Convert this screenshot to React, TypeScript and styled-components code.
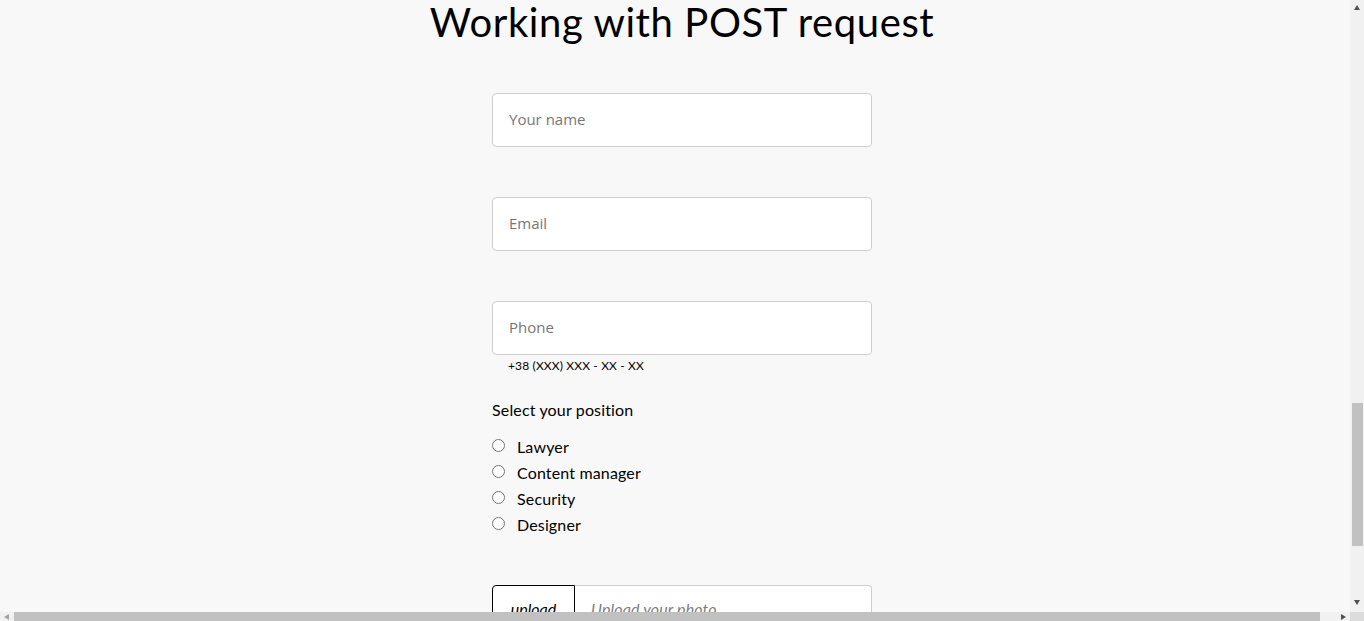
import React, { useEffect } from "react";
import styled, { createGlobalStyle } from "styled-components";

// the form sits low on a long landing page; the shot is taken scrolled down to it
const SCROLL_TOP = 1668;

const GlobalStyle = createGlobalStyle`
  html, body {
    margin: 0;
    padding: 0;
    background: #f8f8f8;
  }
  body {
    font-family: Lato, "Noto Sans", sans-serif;
    color: #000;
    letter-spacing: 0.15px;
  }
`;

const Page = styled.div`
  min-width: 1364px;
  min-height: 2500px;
  padding-top: ${SCROLL_TOP - 2}px;
  box-sizing: border-box;
`;

const Section = styled.section`
  display: flex;
  flex-direction: column;
  align-items: center;
`;

const Title = styled.h1`
  margin: 0;
  font-size: 40px;
  line-height: 48px;
  font-weight: 400;
  letter-spacing: 0.6px;
`;

const Form = styled.form`
  width: 380px;
  margin-top: 47px;
  display: flex;
  flex-direction: column;
`;

const Field = styled.div<{ gap?: number }>`
  display: flex;
  flex-direction: column;
  margin-bottom: ${({ gap }) => (gap === undefined ? 50 : gap)}px;
`;

const Input = styled.input`
  box-sizing: border-box;
  width: 100%;
  height: 54px;
  padding: 0 16px 2px;
  border: 1px solid #d0cfcf;
  border-radius: 4px;
  background: #fff;
  font-family: "Open Sans", "Noto Sans", sans-serif;
  font-size: 15px;
  letter-spacing: 0;
  outline: none;
  &::placeholder {
    font-family: "Open Sans", "Noto Sans", sans-serif;
    font-size: 15px;
    color: #767676;
  }
`;

const Helper = styled.span`
  margin-top: 4px;
  padding-left: 16px;
  font-size: 12px;
  line-height: 14px;
  color: #000;
`;

const Legend = styled.div`
  margin-top: 27px;
  font-size: 16px;
  line-height: 20px;
`;

const RadioList = styled.div`
  margin-top: 13px;
  display: flex;
  flex-direction: column;
`;

const RadioRow = styled.label`
  display: flex;
  align-items: center;
  height: 26px;
  font-size: 16px;
  cursor: pointer;
`;

const Radio = styled.input`
  width: 13px;
  height: 13px;
  margin: 0 12px 0 0;
  position: relative;
  top: -1px;
`;

const Upload = styled.div`
  margin-top: 48px;
  display: flex;
  height: 54px;
`;

const UploadButton = styled.button`
  width: 83px;
  padding: 0 0 7px;
  border: 1px solid #000;
  border-radius: 4px 0 0 4px;
  background: #fff;
  font-family: Lato, "Noto Sans", sans-serif;
  font-size: 16px;
  font-style: italic;
  color: #000;
  cursor: pointer;
`;

const UploadInput = styled.div`
  flex: 1;
  display: flex;
  align-items: center;
  padding: 0 0 7px 16px;
  border: 1px solid #d0cfcf;
  border-left: none;
  border-radius: 0 4px 4px 0;
  background: #fff;
  font-size: 16px;
  font-style: italic;
  color: #7e7e7e;
`;

/* the browser's own scrollbars, as they show in the shot */
const VScroll = styled.div`
  position: fixed;
  top: 0;
  right: 0;
  bottom: 9px;
  width: 14px;
  background: #f1f1f1;
  display: flex;
  flex-direction: column;
  align-items: center;
  justify-content: space-between;
  padding: 5px 0 7px;
  box-sizing: border-box;
`;

const VThumb = styled.div`
  position: absolute;
  top: 403px;
  left: 2px;
  width: 11px;
  height: 143px;
  background: #c1c1c1;
`;

const HScroll = styled.div`
  position: fixed;
  left: 0;
  right: 14px;
  bottom: 0;
  height: 9px;
  background: #f1f1f1;
  display: flex;
  align-items: flex-start;
  padding-top: 2px;
  box-sizing: border-box;
`;

const HThumb = styled.div`
  position: absolute;
  top: 0;
  left: 14px;
  width: 1306px;
  height: 9px;
  background: #c1c1c1;
`;

const Corner = styled.div`
  position: fixed;
  right: 0;
  bottom: 0;
  width: 14px;
  height: 9px;
  background: #dcdcdc;
`;

const Arrow = styled.span<{ dir: "up" | "down" | "left" | "right" }>`
  width: 0;
  height: 0;
  border-style: solid;
  border-color: transparent;
  ${({ dir }) =>
    dir === "up"
      ? "border-width: 0 3.5px 5px; border-bottom-color: #505050;"
      : dir === "down"
      ? "border-width: 5px 3.5px 0; border-top-color: #505050;"
      : dir === "left"
      ? "border-width: 3.5px 5px 3.5px 0; border-right-color: #a3a3a3; margin-left: 4px;"
      : "border-width: 3.5px 0 3.5px 5px; border-left-color: #505050; margin-left: auto; margin-right: 4px;"}
`;

const positions = ["Lawyer", "Content manager", "Security", "Designer"];

export default function App() {
  useEffect(() => {
    window.scrollTo(0, SCROLL_TOP);
  }, []);

  return (
    <>
      <GlobalStyle />
      <Page>
        <Section>
          <Title>Working with POST request</Title>
          <Form onSubmit={(e) => e.preventDefault()}>
            <Field>
              <Input type="text" placeholder="Your name" />
            </Field>
            <Field>
              <Input type="email" placeholder="Email" />
            </Field>
            <Field gap={0}>
              <Input type="tel" placeholder="Phone" />
              <Helper>+38 (XXX) XXX - XX - XX</Helper>
            </Field>
            <Legend>Select your position</Legend>
            <RadioList>
              {positions.map((p) => (
                <RadioRow key={p}>
                  <Radio type="radio" name="position" value={p} />
                  {p}
                </RadioRow>
              ))}
            </RadioList>
            <Upload>
              <UploadButton type="button">upload</UploadButton>
              <UploadInput>Upload your photo</UploadInput>
            </Upload>
          </Form>
        </Section>
      </Page>
      <VScroll>
        <Arrow dir="up" />
        <VThumb />
        <Arrow dir="down" />
      </VScroll>
      <HScroll>
        <Arrow dir="left" />
        <HThumb />
        <Arrow dir="right" />
      </HScroll>
      <Corner />
    </>
  );
}
